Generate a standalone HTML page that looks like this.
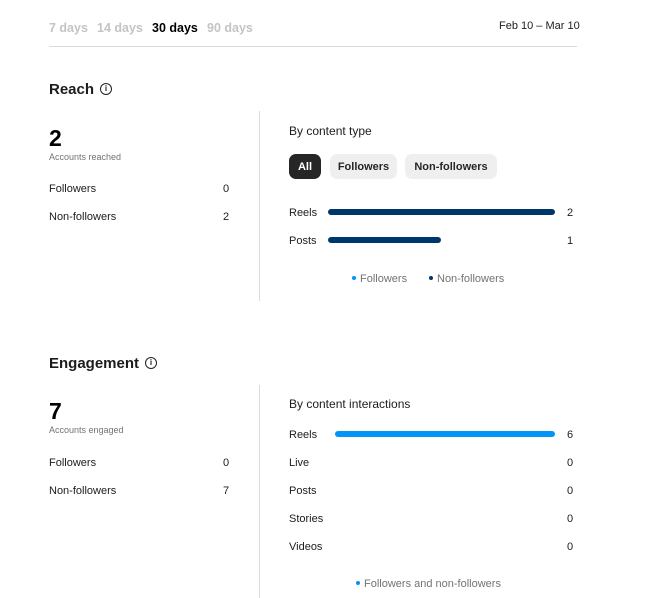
<!DOCTYPE html>
<html><head><meta charset="utf-8"><style>
body{margin:0;width:651px;height:598px;background:#fff;font-family:"Liberation Sans",sans-serif;color:#1c1c1c;position:relative;overflow:hidden}
.a{position:absolute;white-space:nowrap}
.t{font-size:11px;line-height:14px}
.tab{font-size:12.5px;font-weight:bold;color:#c4c4c4;top:21px}
.h{font-size:15px;font-weight:bold;line-height:18px}
.big{font-size:23px;font-weight:bold;line-height:26px;color:#000}
.sub{font-size:9px;color:#737373;line-height:12px}
.st{font-size:12px;line-height:15px}
.bar{position:absolute;height:6px;border-radius:3px}
.pill{position:absolute;top:154px;height:25px;border-radius:7px;background:#efefef;font-size:11px;font-weight:bold;line-height:26px;text-align:center;color:#262626}
.dot{display:inline-block;width:4px;height:4px;border-radius:2px;margin-right:4px;vertical-align:2px}
.info{display:inline-block;width:10px;height:10px;border:1.2px solid #222;border-radius:50%;font-size:8px;line-height:10px;text-align:center;font-weight:bold;vertical-align:3px;margin-left:6px}
.vl{position:absolute;left:259px;width:1px;background:#dbdbdb}
</style></head><body>
<div class="a tab" style="left:49px">7 days</div>
<div class="a tab" style="left:97px">14 days</div>
<div class="a tab" style="left:152px;color:#000">30 days</div>
<div class="a tab" style="left:207px">90 days</div>
<div class="a t" style="left:499px;top:19px;color:#1c1c1c">Feb 10 – Mar 10</div>
<div class="a" style="left:49px;top:46px;width:528px;height:1px;background:#dbdbdb"></div>

<div class="a h" style="left:49px;top:81px">Reach<span class="info">i</span></div>
<div class="a big" style="left:49px;top:125px">2</div>
<div class="a sub" style="left:49px;top:151px">Accounts reached</div>
<div class="a t" style="left:49px;top:182px">Followers</div><div class="a t" style="left:223px;top:182px">0</div>
<div class="a t" style="left:49px;top:210px">Non-followers</div><div class="a t" style="left:223px;top:210px">2</div>
<div class="vl" style="top:111px;height:190px"></div>
<div class="a st" style="left:289px;top:124px">By content type</div>
<div class="pill" style="left:289px;width:32px;background:#262626;color:#fff">All</div>
<div class="pill" style="left:330px;width:67px">Followers</div>
<div class="pill" style="left:405px;width:92px">Non-followers</div>
<div class="a t" style="left:289px;top:206px">Reels</div>
<div class="bar" style="left:328px;top:209px;width:227px;background:#00376b"></div>
<div class="a t" style="left:567px;top:206px">2</div>
<div class="a t" style="left:289px;top:234px">Posts</div>
<div class="bar" style="left:328px;top:237px;width:113px;background:#00376b"></div>
<div class="a t" style="left:567px;top:234px">1</div>
<div class="a t" style="left:352px;top:272px;color:#737373"><span class="dot" style="background:#0095f6"></span>Followers</div>
<div class="a t" style="left:429px;top:272px;color:#737373"><span class="dot" style="background:#00376b"></span>Non-followers</div>

<div class="a h" style="left:49px;top:355px">Engagement<span class="info">i</span></div>
<div class="a big" style="left:49px;top:398px">7</div>
<div class="a sub" style="left:49px;top:424px">Accounts engaged</div>
<div class="a t" style="left:49px;top:456px">Followers</div><div class="a t" style="left:223px;top:456px">0</div>
<div class="a t" style="left:49px;top:484px">Non-followers</div><div class="a t" style="left:223px;top:484px">7</div>
<div class="vl" style="top:385px;height:213px"></div>
<div class="a st" style="left:289px;top:397px">By content interactions</div>
<div class="a t" style="left:289px;top:428px">Reels</div>
<div class="bar" style="left:335px;top:431px;width:220px;background:#0095f6"></div>
<div class="a t" style="left:567px;top:428px">6</div>
<div class="a t" style="left:289px;top:456px">Live</div><div class="a t" style="left:567px;top:456px">0</div>
<div class="a t" style="left:289px;top:484px">Posts</div><div class="a t" style="left:567px;top:484px">0</div>
<div class="a t" style="left:289px;top:512px">Stories</div><div class="a t" style="left:567px;top:512px">0</div>
<div class="a t" style="left:289px;top:540px">Videos</div><div class="a t" style="left:567px;top:540px">0</div>
<div class="a t" style="left:356px;top:577px;color:#737373"><span class="dot" style="background:#0095f6"></span>Followers and non-followers</div>
</body></html>
